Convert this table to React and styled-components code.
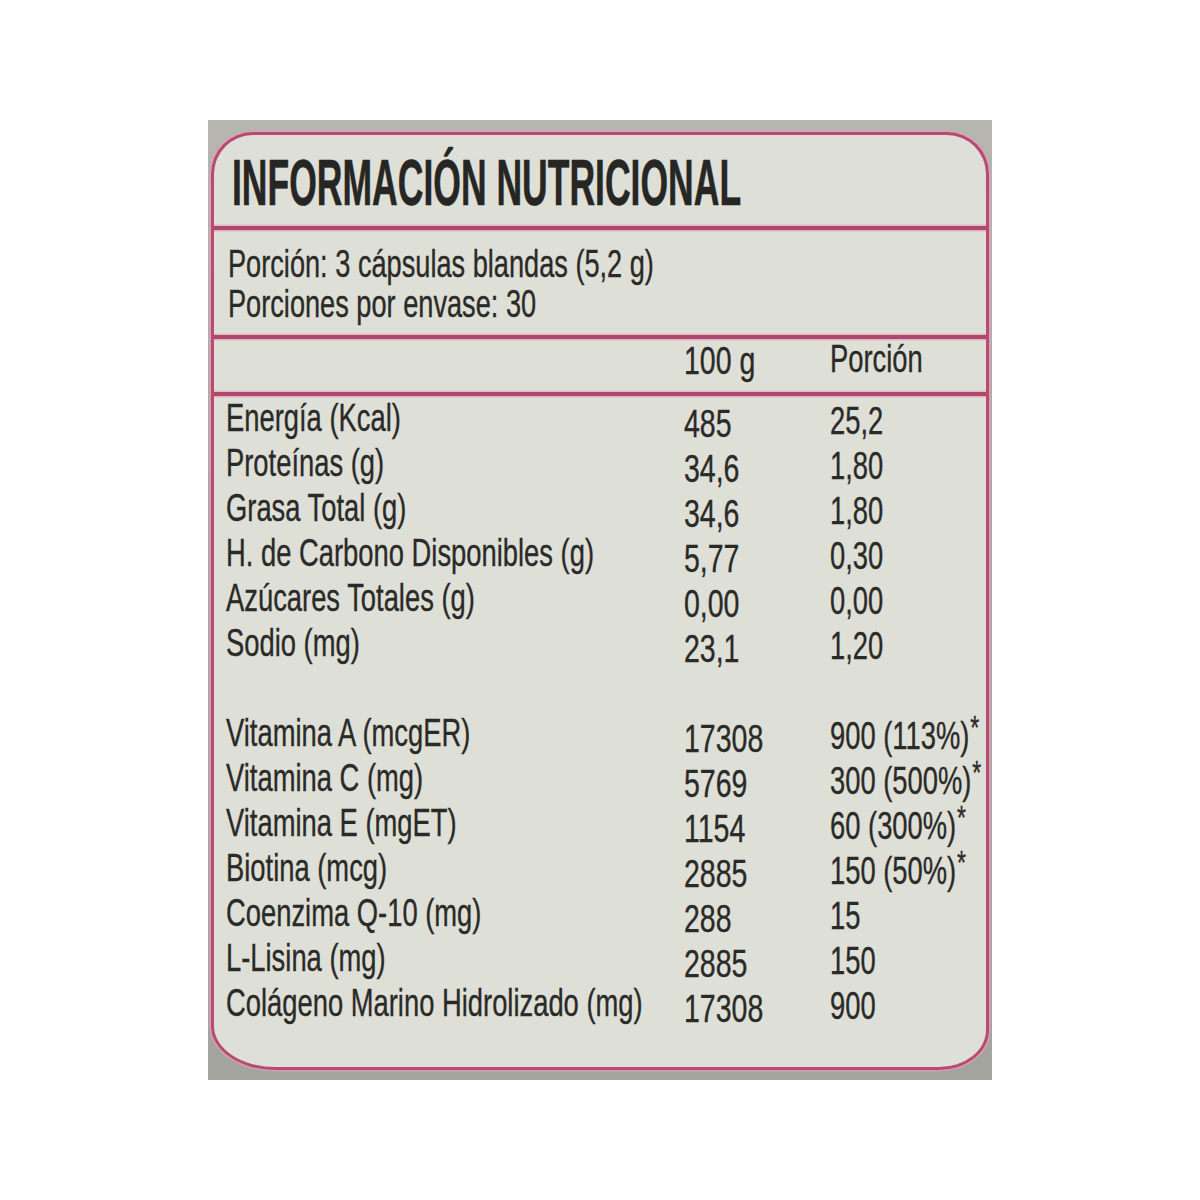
import React from "react";
import styled, { createGlobalStyle } from "styled-components";

const GlobalStyle = createGlobalStyle`
  html, body {
    margin: 0;
    padding: 0;
    background: #ffffff;
  }
  body {
    font-family: "Liberation Sans", Arial, sans-serif;
    color: #2a2a28;
  }
`;

const Photo = styled.div`
  box-sizing: border-box;
  width: 784px;
  height: 960px;
  margin: 120px 0 0 208px;
  padding: 12px 3px 0 3px;
  background: linear-gradient(180deg, #b6b6ae 0%, #a9aaa3 40%, #a3a49d 100%);
`;

const Label = styled.div`
  box-sizing: border-box;
  height: 938px;
  display: flex;
  flex-direction: column;
  background: #dedfd6;
  border: 3px solid #b84a74;
  border-radius: 42px 42px 50px 64px / 42px 42px 40px 44px;
  box-shadow: 0 0 0 1.5px rgba(226, 160, 184, 0.75);
  overflow: hidden;
`;

const TitleBar = styled.div`
  height: 91px;
  display: flex;
  align-items: center;
  padding-left: 18px;
  padding-top: 4px;
  box-sizing: border-box;
`;

const Title = styled.h1`
  margin: 0;
  font-size: 64px;
  font-weight: 700;
  line-height: 1;
  white-space: nowrap;
  color: #262624;
  -webkit-text-stroke: 0.6px #262624;
  transform: scaleX(0.555);
  transform-origin: left center;
`;

const Divider = styled.div`
  height: 4px;
  flex: none;
  background: #ad476e;
  box-shadow: 0 1.5px 0 rgba(230, 168, 190, 0.85), 0 -1.5px 0 rgba(230, 168, 190, 0.7);
`;

const Serving = styled.div`
  height: 105px;
  box-sizing: border-box;
  padding: 14px 0 0 14px;
`;

const Line = styled.div`
  height: 40px;
  line-height: 40px;
  font-size: 38px;
  white-space: nowrap;
`;

const Txt = styled.span`
  display: inline-block;
  white-space: nowrap;
  -webkit-text-stroke: 0.35px #2a2a28;
  transform: scaleX(${(p) => p.$scale || 0.72});
  transform-origin: left center;
  position: relative;
  top: ${(p) => p.$lift || 0}px;
`;

const Grid = styled.div`
  display: grid;
  grid-template-columns: 458px 146px 1fr;
  padding-left: 12px;
  font-size: 38px;
`;

const HeaderGrid = styled(Grid)`
  height: 53px;
  box-sizing: border-box;
  padding-top: 2px;
  line-height: 40px;
`;

const Body = styled(Grid)`
  padding-top: 6px;
  grid-auto-rows: 45px;
  line-height: 45px;
`;

const Cell = styled.div`
  white-space: nowrap;
  overflow: visible;
`;

const Spacer = styled.div`
  grid-column: 1 / -1;
`;

const Star = styled.span`
  display: inline-block;
  font-size: 0.85em;
  line-height: 0;
  position: relative;
  top: -0.3em;
  margin-left: 1px;
`;

const nutrients = [
  ["Energía (Kcal)", "485", "25,2"],
  ["Proteínas (g)", "34,6", "1,80"],
  ["Grasa Total (g)", "34,6", "1,80"],
  ["H. de Carbono Disponibles (g)", "5,77", "0,30"],
  ["Azúcares Totales (g)", "0,00", "0,00"],
  ["Sodio (mg)", "23,1", "1,20"],
];

const extras = [
  ["Vitamina A (mcgER)", "17308", "900 (113%)", true],
  ["Vitamina C (mg)", "5769", "300 (500%)", true],
  ["Vitamina E (mgET)", "1154", "60 (300%)", true],
  ["Biotina (mcg)", "2885", "150 (50%)", true],
  ["Coenzima Q-10 (mg)", "288", "15", false],
  ["L-Lisina (mg)", "2885", "150", false],
  ["Colágeno Marino Hidrolizado (mg)", "17308", "900", false],
];

const Row = ({ name, per100, portion, star }) => (
  <>
    <Cell>
      <Txt $lift={-6}>{name}</Txt>
    </Cell>
    <Cell>
      <Txt $scale={0.75}>{per100}</Txt>
    </Cell>
    <Cell>
      <Txt $scale={0.72} $lift={-3}>
        {portion}
        {star && <Star>*</Star>}
      </Txt>
    </Cell>
  </>
);

export default function App() {
  return (
    <>
      <GlobalStyle />
      <Photo>
        <Label>
          <TitleBar>
            <Title>INFORMACIÓN NUTRICIONAL</Title>
          </TitleBar>
          <Divider />
          <Serving>
            <Line>
              <Txt $scale={0.715}>Porción: 3 cápsulas blandas (5,2 g)</Txt>
            </Line>
            <Line>
              <Txt $scale={0.715}>Porciones por envase: 30</Txt>
            </Line>
          </Serving>
          <Divider />
          <HeaderGrid>
            <Cell />
            <Cell>
              <Txt $scale={0.75}>100 g</Txt>
            </Cell>
            <Cell>
              <Txt $scale={0.72} $lift={-2}>
                Porción
              </Txt>
            </Cell>
          </HeaderGrid>
          <Divider />
          <Body>
            {nutrients.map(([n, a, b]) => (
              <Row key={n} name={n} per100={a} portion={b} />
            ))}
            <Spacer />
            {extras.map(([n, a, b, s]) => (
              <Row key={n} name={n} per100={a} portion={b} star={s} />
            ))}
          </Body>
        </Label>
      </Photo>
    </>
  );
}
